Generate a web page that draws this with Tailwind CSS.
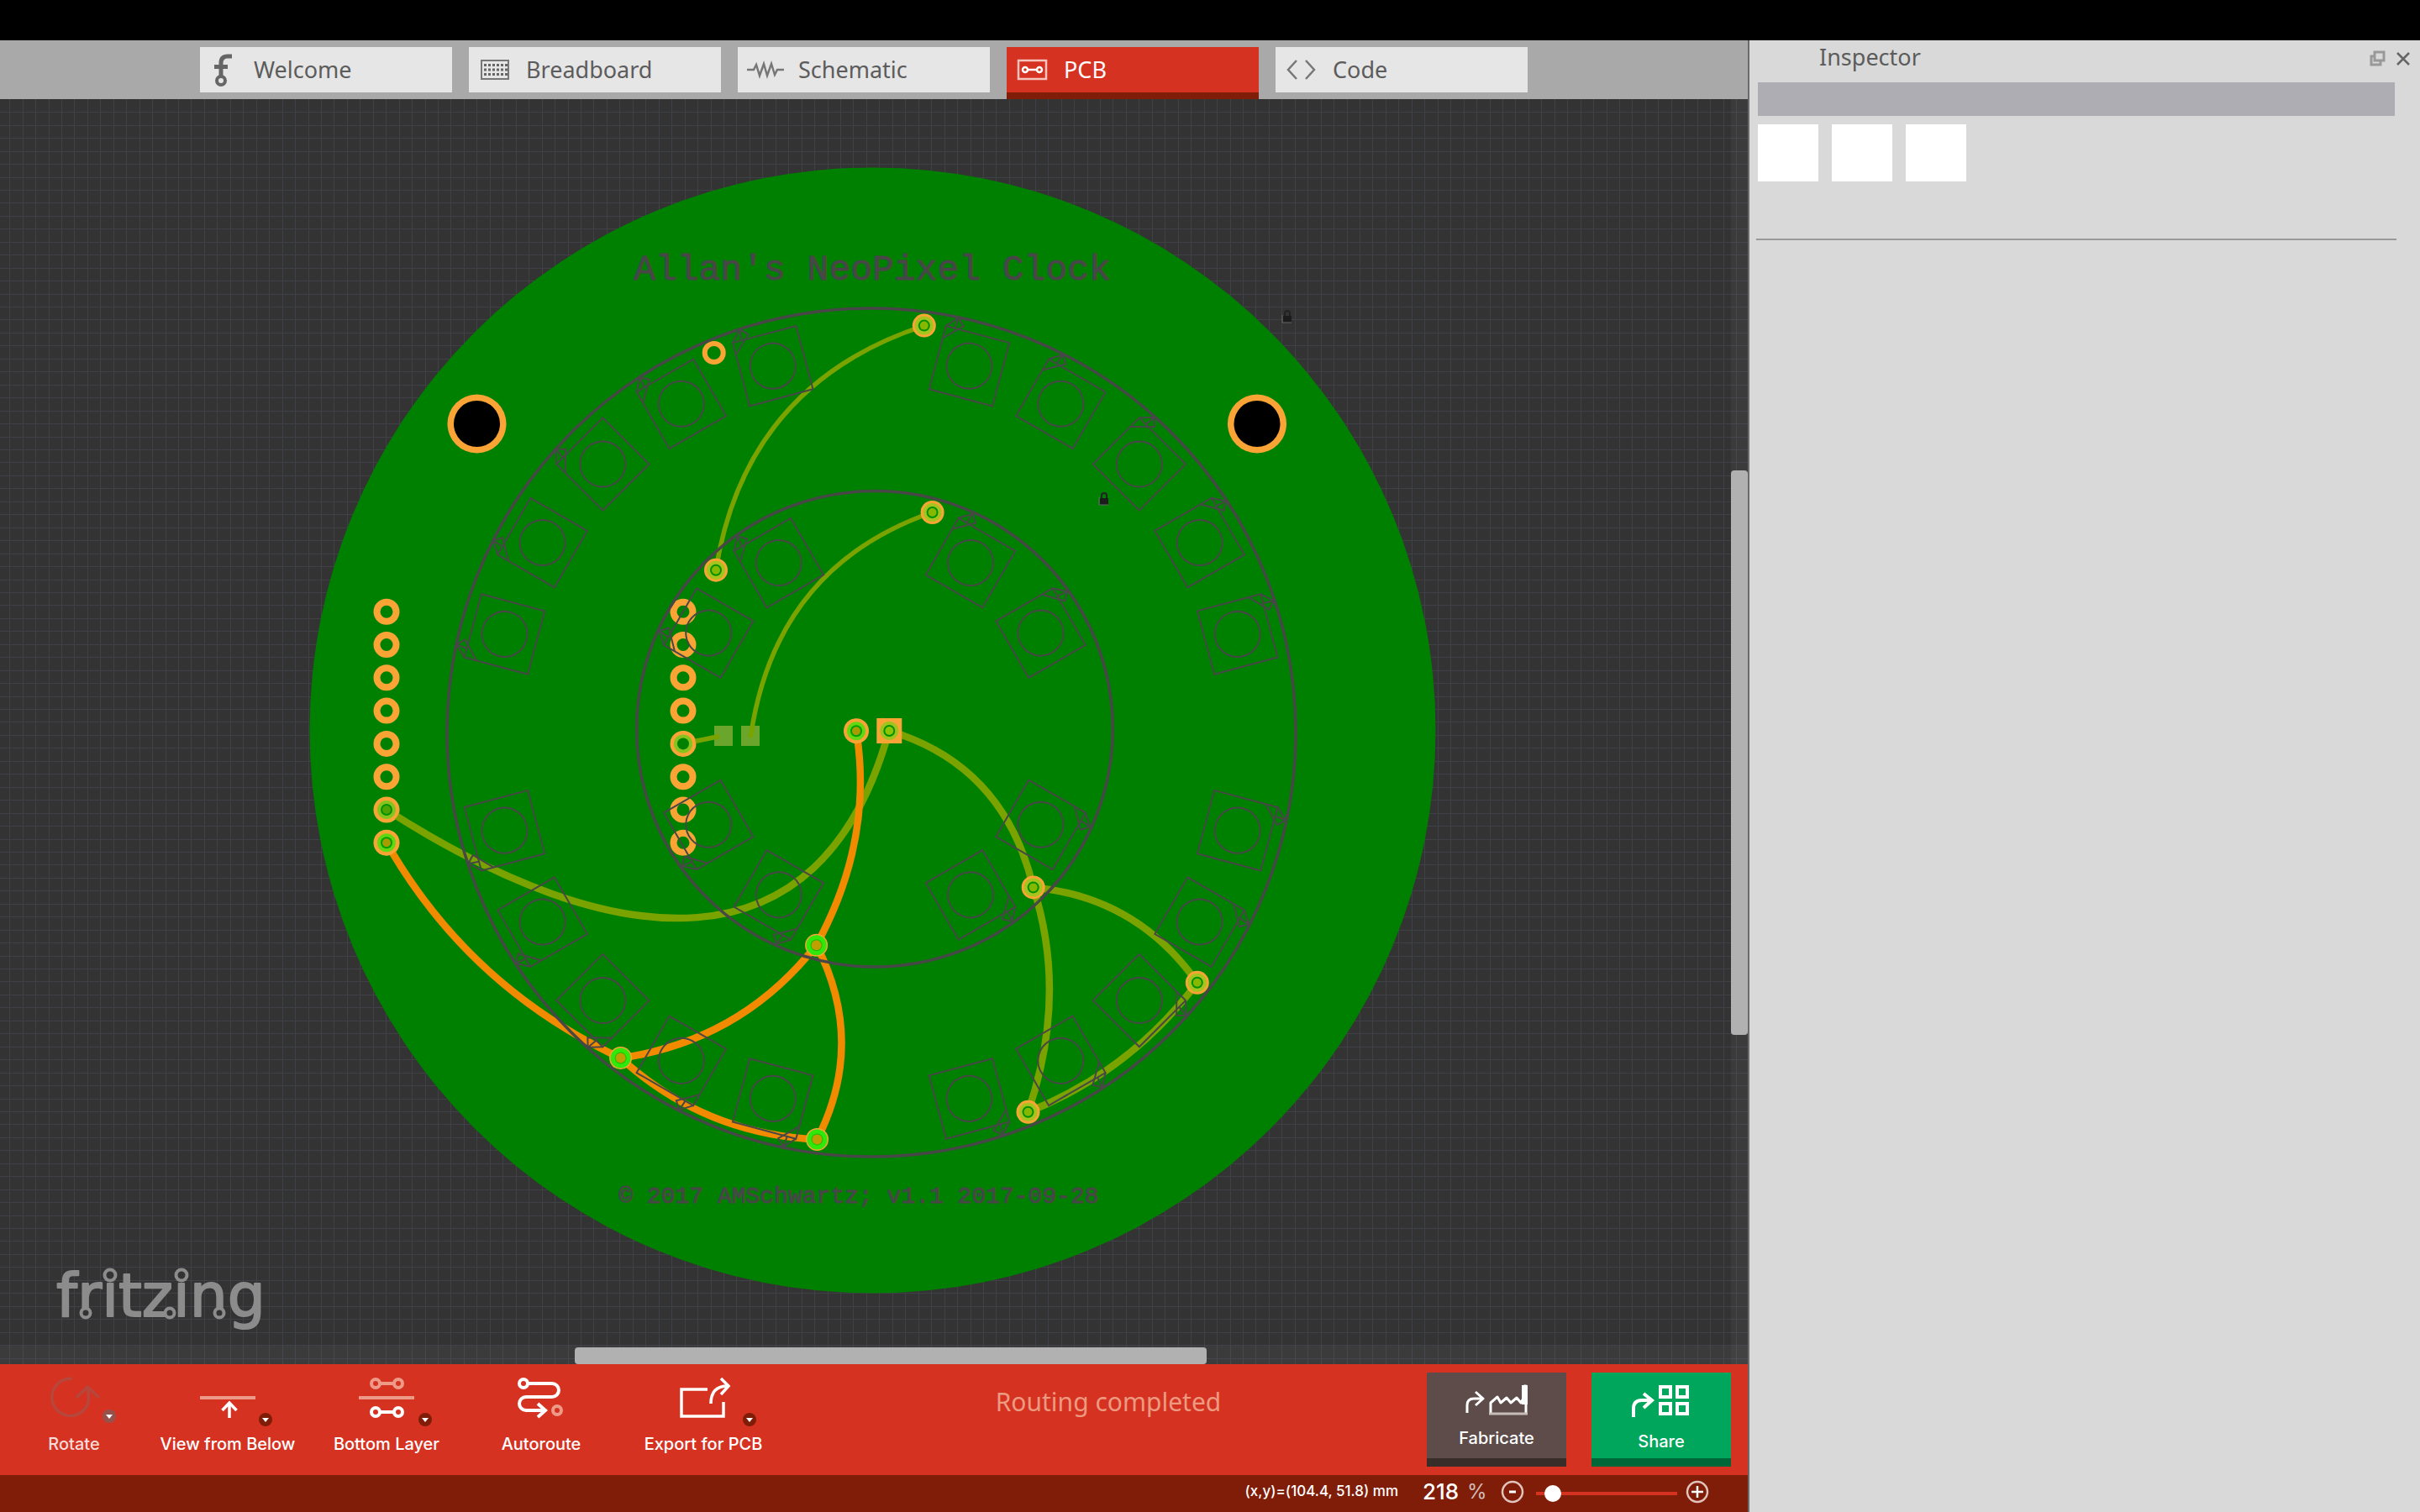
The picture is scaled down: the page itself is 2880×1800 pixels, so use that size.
<!DOCTYPE html>
<html lang="en">
<head>
<meta charset="utf-8">
<title>Fritzing - PCB</title>
<script src="https://cdn.jsdelivr.net/npm/@tailwindcss/browser@4"></script>
</head>
<body class="flex h-screen flex-col overflow-hidden bg-black font-['Noto_Sans',sans-serif]">
<div class="h-12 shrink-0 bg-black"></div>
<div class="flex min-h-0 flex-1">
  <main class="flex min-w-0 flex-1 flex-col">
    <nav class="flex h-[70px] shrink-0 items-start gap-5 bg-[#a9a9a9] pt-2 pl-[238px] text-[27px] leading-[54px] text-[#5c5c5c]">
      <button class="flex h-[54px] w-[300px] items-center bg-[#e6e6e6] pl-3">
        <svg class="mr-4 h-11 w-9" viewBox="0 0 36 44" fill="none" stroke="#666" stroke-width="5"><path d="M26 6h-5q-8 0-8 8v16M5 18.500h16"/><circle cx="13" cy="35" r="5" stroke-width="4"/></svg>Welcome</button>
      <button class="flex h-[54px] w-[300px] items-center bg-[#e6e6e6] pl-3">
        <svg class="mr-4 h-7 w-10" viewBox="0 0 40 28" fill="none" stroke="#777" stroke-width="2"><rect x="3" y="3" width="32" height="22"/><path d="M6 8.500h28M6 14h28M6 19.500h28" stroke="#666" stroke-width="3" stroke-dasharray="3 2"/></svg>Breadboard</button>
      <button class="flex h-[54px] w-[300px] items-center bg-[#e6e6e6] pl-2">
        <svg class="mr-4 h-7 w-12" viewBox="0 0 48 28" fill="none" stroke="#777" stroke-width="2.500"><path d="M3 14h8l3-6 4 13 5-14 4 14 5-14 4 13 3-6h8"/></svg>Schematic</button>
      <button class="flex h-[62px] w-[300px] items-center border-b-8 border-[#801d08] bg-[#d63222] pl-3 text-white">
        <svg class="mr-4 h-7 w-10" viewBox="0 0 40 28" fill="none" stroke="#fff" stroke-width="2.500"><rect x="2" y="3" width="33" height="22" stroke="#f6c4bd"/><circle cx="10" cy="14" r="3"/><circle cx="27" cy="14" r="3"/><path d="M13 14h11"/></svg>PCB</button>
      <button class="flex h-[54px] w-[300px] items-center bg-[#e6e6e6] pl-3">
        <svg class="mr-4 h-7 w-10" viewBox="0 0 40 28" fill="none" stroke="#777" stroke-width="2.500"><path d="M13 3 3 14l10 11M24 3l10 11-10 11"/></svg>Code</button>
    </nav>

    <section class="relative min-h-0 flex-1 bg-[#333]" aria-label="PCB view">
      <svg class="absolute inset-0 h-full w-full" viewBox="0 118 2080 1506" preserveAspectRatio="xMidYMid slice">
        <path id="grid" fill="none" stroke="#3e4145" stroke-width="1" shape-rendering="crispEdges"/>
        <circle cx="1038.500" cy="869.500" r="670" fill="#008000"/>
        <g id="pads" fill="none" stroke="#faa435"></g>
        <g fill="#faa435" stroke="none"><circle cx="567.500" cy="504.500" r="35"/><circle cx="1496" cy="504.500" r="35"/></g>
        <g fill="#000"><circle cx="567.500" cy="504.500" r="27.500"/><circle cx="1496" cy="504.500" r="27.500"/></g>
        <rect x="850" y="864" width="22" height="24" fill="#6aa62c"/><rect x="882" y="864" width="22" height="24" fill="#6aa62c"/>
        <g fill="none" stroke="#7aa300" stroke-width="5.500" stroke-linecap="round">
          <path d="M1099 388Q888 457.600 852 678"/>
          <path d="M1109 610Q923 675 893.500 876"/>
          <path d="M813 885Q830 882 854 877"/>
        </g>
        <g fill="none" stroke="#7aa300" stroke-width="8.500" stroke-linecap="round">
          <path d="M1058 870C977 1164 730 1137 460 964"/>
          <path d="M1058 870Q1195 911 1229.700 1056.400"/>
          <path d="M1229.700 1056.400Q1353 1068 1424.800 1169.800"/>
          <path d="M1229.700 1056.400Q1271 1185 1223.500 1323.800"/>
          <path d="M1424.800 1169.800Q1346 1275 1223.500 1323.800"/>
        </g>
        <g fill="none" stroke="#f28a00" stroke-width="8.500" stroke-linecap="round">
          <path d="M1019 870Q1040 1000 971.600 1125"/>
          <path d="M971.600 1125Q882 1239 738.600 1259.600"/>
          <path d="M971.600 1125Q1031 1241 972.500 1356.400"/>
          <path d="M460 1003.300Q558 1175 738.600 1259.600"/>
          <path d="M738.600 1259.600Q838 1350 972.500 1356.400"/>
        </g>
        <g id="joints"></g>
        <g fill="none" stroke="#474747" stroke-width="3.500"><circle cx="1037" cy="872" r="505"/><circle cx="1041" cy="867.800" r="283.300"/></g>
        <g id="leds" fill="none" stroke="#474747" stroke-width="2"></g>
        <g class="font-['Liberation_Mono',monospace]" fill="#474747" stroke="#474747" text-anchor="middle">
          <text x="1038" y="333" font-size="43">Allan's NeoPixel Clock</text>
          <text x="1022" y="1432" font-size="28">© 2017 AMSchwartz; v1.1 2017-09-28</text>
        </g>
        <g id="locks"></g>
        <text class="font-['DejaVu_Sans',sans-serif]" x="67" y="1567" font-size="71" fill="#8c8c8c" stroke="#8c8c8c" stroke-width="2" stroke-linejoin="round">fritzing</text>
        <g fill="#333" stroke="#8c8c8c" stroke-width="4"><circle cx="131" cy="1518" r="6.500"/><circle cx="216" cy="1518" r="6.500"/><circle cx="102" cy="1563" r="5.500"/><circle cx="202" cy="1563" r="5.500"/><circle cx="261" cy="1563" r="5.500"/></g>
      </svg>
      <div class="absolute inset-y-0 right-0 w-5 bg-white/4"><div class="mt-[442px] h-[672px] rounded-sm bg-[#b1b1b1]"></div></div>
      <div class="absolute inset-x-0 bottom-0 h-[22px] bg-white/4 pt-0.5"><div class="ml-[684px] h-5 w-[752px] rounded-sm bg-[#b1b1b1]"></div></div>
    </section>

    <div class="flex h-[132px] shrink-0 items-start justify-between bg-[#d63222] pr-5 font-['Inter',sans-serif] text-[20px] leading-6 font-medium text-white">
      <div class="flex pt-3">
        <button class="flex w-[176px] flex-col items-center gap-[15px]">
          <svg class="h-14 w-[100px] overflow-visible" viewBox="0 0 100 56" fill="none" stroke="#b5473c" stroke-width="3.500"><path d="M48 5.500A22 22 0 1 0 66 36Q69 30 66 16M53 28 66 15l14 13"/><circle cx="92" cy="50" r="8" fill="#96514b" stroke="none"/><path d="M88 48h8l-4 5z" fill="#fff" stroke="none"/></svg><span class="text-[#f8dcd9]">Rotate</span></button>
        <button class="flex w-[190px] flex-col items-center gap-[15px]">
          <svg class="h-14 w-[100px] overflow-visible" viewBox="0 0 100 56" fill="none" stroke="#fff" stroke-width="3.500"><path d="M17 28h66" stroke="#ee9a88" stroke-width="4"/><path d="M52 52V35M43.500 43l8.500-9 8.500 9"/><circle cx="95" cy="54" r="8" fill="#801d08" stroke="none"/><path d="M91 52h8l-4 5z" fill="#fff" stroke="none"/></svg>View from Below</button>
        <button class="flex w-[188px] flex-col items-center gap-[15px]">
          <svg class="h-14 w-[100px] overflow-visible" viewBox="0 0 100 56" fill="none" stroke="#fff" stroke-width="4"><g stroke="#ee9a88"><circle cx="37" cy="11" r="5"/><circle cx="64" cy="11" r="5"/><path d="M42 11h17M17 28h66"/></g><circle cx="37" cy="45" r="5"/><circle cx="64" cy="45" r="5"/><path d="M42 45h17"/><circle cx="96" cy="54" r="8" fill="#801d08" stroke="none"/><path d="M92 52h8l-4 5z" fill="#fff" stroke="none"/></svg>Bottom Layer</button>
        <button class="flex w-[180px] flex-col items-center gap-[15px]">
          <svg class="h-14 w-[100px] overflow-visible" viewBox="0 0 100 56" fill="none" stroke="#fff" stroke-width="4"><circle cx="29" cy="11" r="5"/><path d="M34 11h29a8 8 0 0 1 0 16H32a8 8 0 0 0 0 16h22M46 35l9 8-9 8"/><circle cx="69" cy="43" r="5" stroke="#ee9a88"/></svg>Autoroute</button>
        <button class="flex w-[206px] flex-col items-center gap-[15px]">
          <svg class="h-14 w-[100px] overflow-visible" viewBox="0 0 100 56" fill="none" stroke="#fff" stroke-width="3.500"><path d="M55 18H24v32h50V33M59 35q0-21 20-21M71 5l9 9-9 10"/><circle cx="105" cy="54" r="8" fill="#801d08" stroke="none"/><path d="M101 52h8l-4 5z" fill="#fff" stroke="none"/></svg>Export for PCB</button>
      </div>
      <p class="pt-6 font-['Noto_Sans',sans-serif] text-[30px] leading-[42px] font-normal text-[#ec9a80]">Routing completed</p>
      <div class="flex gap-[30px] pt-2.5">
        <button class="flex h-[112px] w-[166px] flex-col items-center border-b-10 border-[#392d2a] bg-[#5d4c49] pt-3">
          <svg class="mb-3 h-[42px] w-20" viewBox="0 0 80 42" fill="none" stroke="#fff" stroke-width="3"><path d="M5 36v-9q0-8 8-8h11M15 11l9 8-9 8M33 36v-12l8-7 4 7 7-6 5 6 7-6 5 6 4-7V4h2v32" stroke-linejoin="round"/><path d="M31 37h46" stroke="#c8bcba"/><path d="M70 3h7v23h-7z" fill="#fff" stroke="none"/></svg>Fabricate</button>
        <button class="flex h-[112px] w-[166px] flex-col items-center border-b-10 border-[#006838] bg-[#00a65c] pt-3">
          <svg class="mb-4 h-[42px] w-20" viewBox="0 0 80 42" fill="none" stroke="#fff" stroke-width="4"><path d="M7 41V31q0-10 10-10h13M19 13l10 8-10 9"/><path d="M39 5h12v12H39zM59 5h12v12H59zM39 25h12v12H39zM59 25h12v12H59z"/></svg>Share</button>
      </div>
    </div>

    <div class="flex h-11 shrink-0 items-center justify-end bg-[#801d08] pr-[46px] pb-1 font-['Inter',sans-serif] text-white">
      <span class="mr-[29px] text-[17px] font-medium">(x,y)=(104.4, 51.8) mm</span>
      <input id="zoom" class="w-[53px] bg-transparent text-[26px] leading-8 font-medium" value="218" aria-label="Zoom">
      <label for="zoom" class="mr-4 w-6 text-[24px] leading-8 text-[#d0bdb8]">%</label>
      <button aria-label="Zoom out"><svg class="size-7" viewBox="0 0 28 28" fill="none" stroke="#e0c4bd" stroke-width="2.500"><circle cx="14" cy="14" r="12"/><path d="M10 14h8" stroke="#fff" stroke-width="3"/></svg></button>
      <input type="range" min="0" max="100" value="7" aria-label="Zoom level" class="mr-2.5 ml-3.5 mt-1 h-5 w-[168px] appearance-none bg-transparent bg-[linear-gradient(#d63222,#d63222)] bg-[length:100%_4px] bg-center bg-no-repeat [&::-webkit-slider-thumb]:size-5 [&::-webkit-slider-thumb]:appearance-none [&::-webkit-slider-thumb]:rounded-full [&::-webkit-slider-thumb]:bg-white">
      <button aria-label="Zoom in"><svg class="size-7" viewBox="0 0 28 28" fill="none" stroke="#e0c4bd" stroke-width="2.500"><circle cx="14" cy="14" r="12"/><path d="M7 14h14M14 7v14" stroke="#fff"/></svg></button>
    </div>
  </main>

  <aside class="w-[800px] shrink-0 border-l-2 border-[#6b6b6b] bg-[#d9d9d9]">
    <header class="flex h-[50px] items-start justify-between pr-2.5 pl-[83px]">
      <h2 class="text-[27px] leading-10 text-[#5c5c5c]">Inspector</h2>
      <div class="flex items-center gap-2 pt-2.5">
        <button aria-label="Float panel"><svg class="size-6" viewBox="0 0 24 24" fill="none" stroke="#999" stroke-width="3"><path d="M8 4h11v10H8zM8 9H4v10h11v-5"/></svg></button>
        <button aria-label="Close panel"><svg class="size-5" viewBox="0 0 20 20" stroke="#666" stroke-width="2.500"><path d="m3 3 14 14M17 3 3 17"/></svg></button>
      </div>
    </header>
    <div class="ml-2.5 mr-[30px] h-10 bg-[#aeadb3]"></div>
    <div class="mt-2.5 ml-2.5 flex gap-4">
      <div class="h-[68px] w-[72px] bg-white"></div>
      <div class="h-[68px] w-[72px] bg-white"></div>
      <div class="h-[68px] w-[72px] bg-white"></div>
    </div>
    <hr class="mt-[68px] mr-7 ml-2 border-t-2 border-[#999]">
  </aside>
</div>
<script>
const get = id => document.getElementById(id);

// one-millimetre grid
const mm = 15.45;
let grid = '';
for (let x = 11.2; x < 2080; x += mm) grid += `M${Math.round(x) + 0.5} 118V1624`;
for (let y = 133.3; y < 1624; y += mm) grid += `M0 ${Math.round(y) + 0.5}H2080`;
get('grid').setAttribute('d', grid);

// header pins and the lone via
let pads = '<circle cx="849.7" cy="420" r="11" stroke-width="6"/>';
for (const x of [460, 813]) for (let i = 0; i < 8; i++)
  pads += `<circle cx="${x}" cy="${728.2 + i * 39.3}" r="11.5" stroke-width="8"/>`;
get('pads').innerHTML = pads;

// connected pins: [x, y, kind, radius]
const joints = [[852,678.700,'y',14],[1099.800,387.600,'y',14],[1109.600,610,'y',14],[460,964,'p',15],[813,885.400,'h',15],
  [1058.300,870,'s',15],[1229.700,1056.400,'y',14],[1424.800,1169.800,'y',14],[1223.500,1323.800,'y',14],
  [460,1003.300,'o',15],[1019,870.200,'o',15],[971.600,1125.200,'g',13.500],[738.600,1259.600,'g',13.500],[972.500,1356.400,'g',13.500]];
const inner = {y:['#a5c41e','#009000','#86b800'],p:['#85c41e','#009000','#4fa300'],h:['#85c41e','#008000','#008000'],s:['#a0c41e','#009000','#8ec400'],o:['#62d812','#00a000','#a89c00'],g:['#30e80c','#18c000','#bfa000']};
get('joints').innerHTML = joints.map(([x, y, k, r]) => {
  const [ring, gap, core] = inner[k];
  const base = k === 's' ? `<rect x="${x - 15}" y="${y - 15}" width="30" height="30" fill="#faa435"/>` : `<circle cx="${x}" cy="${y}" r="${r}" fill="#faa435"/>`;
  return base + `<circle cx="${x}" cy="${y}" r="${k === 'g' ? 12 : 11}" fill="${ring}"/><circle cx="${x}" cy="${y}" r="7" fill="${gap}"/><circle cx="${x}" cy="${y}" r="${k === 'g' ? 6 : 5}" fill="${core}"/>`;
}).join('');

// LED outlines round both rings
const led = (cx, cy, r, a) => `<g transform="rotate(${a} ${cx} ${cy}) translate(${cx} ${cy - r})"><rect x="-39" y="-39" width="78" height="78"/><circle r="27"/><path d="M-39-39-27-52-18.5-44-39-24M-27-52-28-39"/></g>`;
let leds = '';
for (let a = 0; a < 360; a += 15) if (a % 90) leds += led(1036.6, 871.8, 451.5, a);
for (let a = 0; a < 360; a += 30) if (a % 90) leds += led(1040.9, 867.7, 228.2, a);
get('leds').innerHTML = leds;

get('locks').innerHTML = [[1532,377],[1314,594]].map(([x, y]) =>
  `<path d="M${x - 3} ${y}v-4a3 3 0 0 1 6 0v4" fill="none" stroke="#222" stroke-width="2"/><path d="M${x - 5} ${y - 1}h10v8h-10z" fill="#1c1c1c"/><path d="M${x - 6} ${y - 2}v9h11" fill="none" stroke="#666"/>`).join('');
</script>
</body>
</html>
